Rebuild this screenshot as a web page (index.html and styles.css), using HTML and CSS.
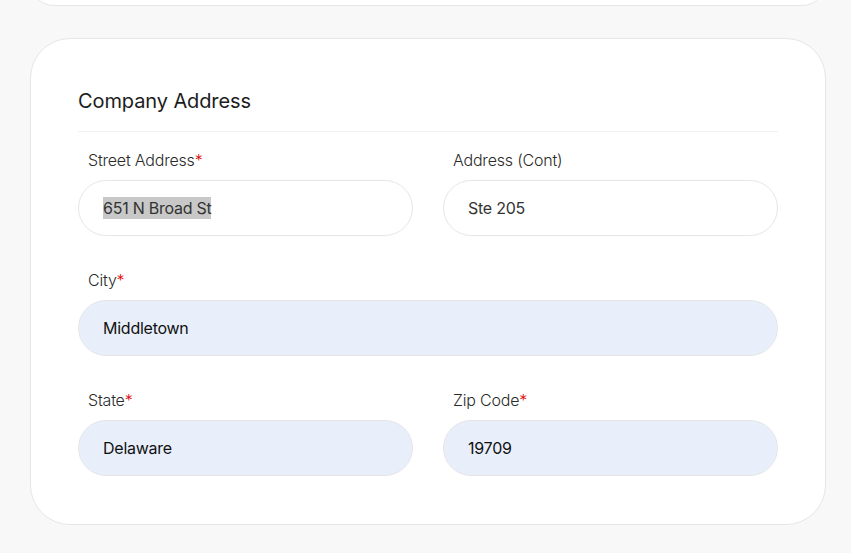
FILE: index.html
```html
<!DOCTYPE html>
<html lang="en">
<head>
    <meta charset="UTF-8">
    <meta name="viewport" content="width=device-width, initial-scale=1.0">
    <title>Company Address</title>
    <link rel="stylesheet" href="styles.css">
</head>
<body>
    <div class="page">
        <div class="card card-prev"></div>

        <div class="card">
            <h2 class="card-title">Company Address</h2>

            <div class="form-grid">
                <div class="form-group">
                    <label>Street Address<span class="req">*</span></label>
                    <div class="field"><span class="selected">651 N Broad St</span></div>
                </div>
                <div class="form-group">
                    <label>Address (Cont)</label>
                    <div class="field">Ste 205</div>
                </div>
                <div class="form-group full">
                    <label>City<span class="req">*</span></label>
                    <div class="field filled">Middletown</div>
                </div>
                <div class="form-group">
                    <label>State<span class="req">*</span></label>
                    <div class="field filled">Delaware</div>
                </div>
                <div class="form-group">
                    <label>Zip Code<span class="req">*</span></label>
                    <div class="field filled">19709</div>
                </div>
            </div>
        </div>
    </div>
</body>
</html>
```

FILE: styles.css
```css
body {
    margin: 0;
    background-color: #f8f8f8;
    font-family: Inter, "Noto Sans", sans-serif;
    color: #222;
    overflow: hidden;
}
.page {
    width: 796px;
    margin-left: 30px;
    margin-top: -56px;
    display: flex;
    flex-direction: column;
    gap: 32px;
}
.card {
    background-color: white;
    border: 1px solid #e6e6e6;
    border-radius: 40px;
    padding: 47px 47px 48px;
}
.card-prev {
    height: 60px;
    padding: 0;
    border-radius: 24px;
}
.card-title {
    margin: 0;
    font-size: 20px;
    font-weight: 400;
    line-height: 30px;
    letter-spacing: -0.1px;
    color: #1c1c1c;
    padding-bottom: 15px;
    border-bottom: 1px solid #f0f0f0;
}
.form-grid {
    display: grid;
    grid-template-columns: 1fr 1fr;
    column-gap: 30px;
    row-gap: 32px;
    margin-top: 16px;
}
.form-group.full {
    grid-column: 1 / 3;
}
label {
    display: block;
    padding-left: 10px;
    margin-bottom: 8px;
    font-size: 16px;
    font-weight: 300;
    line-height: 24px;
    letter-spacing: -0.2px;
    color: #2a2a2a;
}
.req {
    color: #e00000;
}
.field {
    height: 54px;
    border: 1px solid #e6e6e6;
    border-radius: 28px;
    padding: 0 24px;
    display: flex;
    align-items: center;
    font-size: 16px;
    letter-spacing: -0.25px;
    color: #333;
}
.field.filled {
    background-color: #e8effb;
    color: #111;
}
.selected {
    background-color: #c8c8c8;
    line-height: 22px;
}
```
